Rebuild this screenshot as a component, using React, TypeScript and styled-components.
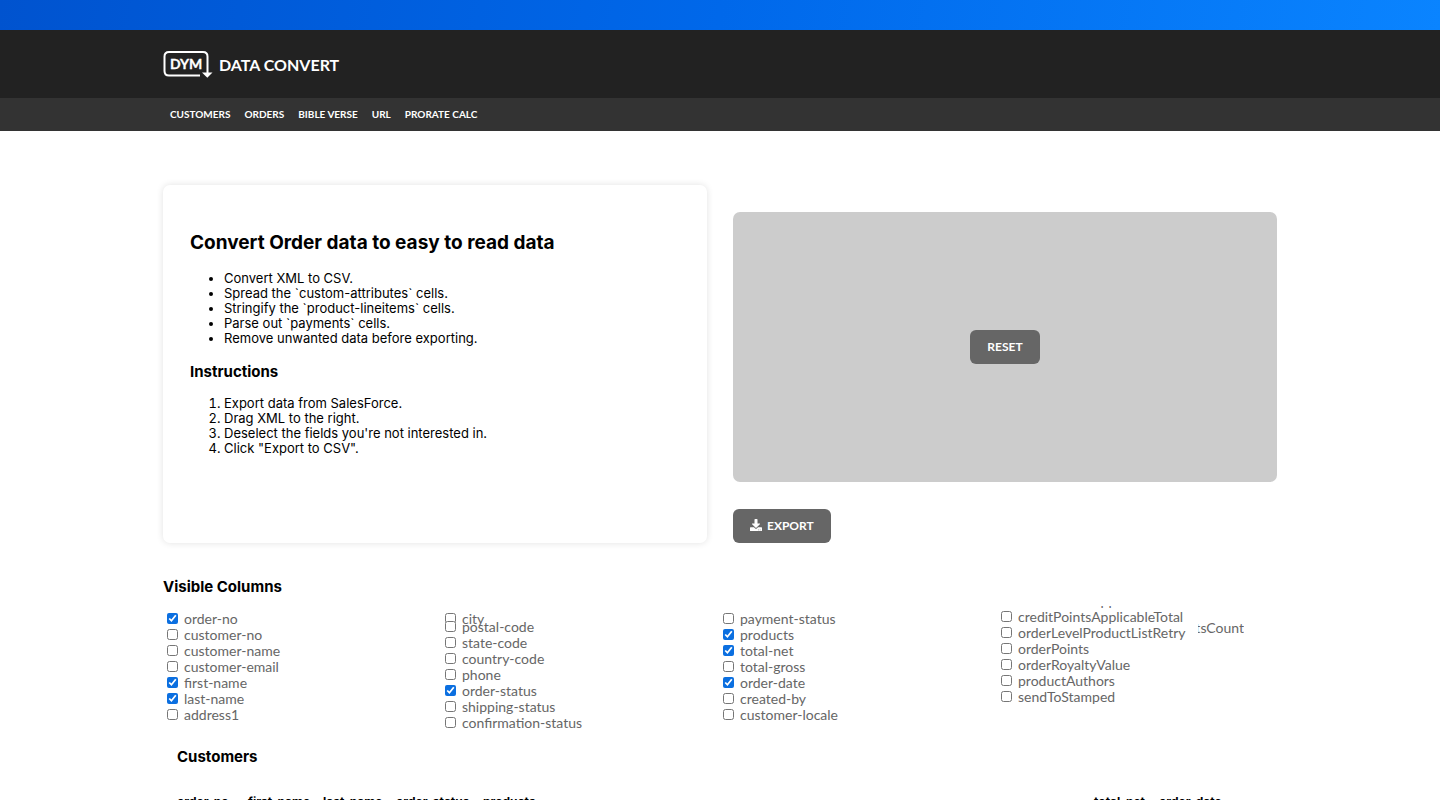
import React from "react";
import styled, { createGlobalStyle } from "styled-components";
import { FaDownload } from "react-icons/fa";

const GlobalStyle = createGlobalStyle`
  *, *::before, *::after { box-sizing: border-box; }
  body {
    margin: 0;
    background: #fff;
    color: #000;
    font-family: Inter, "Liberation Sans", sans-serif;
    font-size: 13px;
    line-height: 15px;
  }
`;

const Banner = styled.div`
  height: 30px;
  background: linear-gradient(100deg, #0053cf 0%, #0068ea 50%, #0a84ff 100%);
`;

const Container = styled.div`
  width: 100%;
  max-width: 1114px;
  margin: 0 auto;
`;

const Header = styled.header`
  background: #222;
  color: #fff;
  font-family: Lato, sans-serif;
`;

const Brand = styled.a`
  display: flex;
  align-items: center;
  gap: 6px;
  height: 68px;
  color: #fff;
  font-size: 16px;
  font-weight: 700;
  text-decoration: none;
`;

const NavBar = styled.nav`
  background: #333;
  font-family: Lato, sans-serif;
`;

const NavLinks = styled.div`
  display: flex;
  align-items: center;
  gap: 14px;
  height: 33px;
  padding-left: 7px;
`;

const NavLink = styled.a`
  color: #fff;
  font-size: 10px;
  font-weight: 700;
  text-decoration: none;
`;

const Hero = styled.section`
  display: grid;
  grid-template-columns: 1fr 1fr;
  gap: 26px;
  padding-top: 54px;
`;

const Card = styled.article`
  padding: 27px;
  border-radius: 7px;
  box-shadow: 0 0 7px rgba(0, 0, 0, 0.12);
`;

const CardTitle = styled.h1`
  margin: 18px 0 16px;
  font-size: 19px;
  line-height: 25px;
`;

const SectionTitle = styled.h2<{ $gap?: number }>`
  margin: 0 0 ${(p) => p.$gap ?? 15}px;
  font-size: 15px;
  line-height: 18px;
`;

const Bullets = styled.ul`
  margin: 0 0 17px;
  padding-left: 34px;
`;

const Steps = styled.ol`
  margin: 0;
  padding-left: 34px;
`;

const Tools = styled.div`
  display: flex;
  flex-direction: column;
  align-items: flex-start;
  gap: 27px;
  padding-top: 27px;
`;

const DropZone = styled.div`
  display: flex;
  align-items: center;
  justify-content: center;
  width: 100%;
  height: 270px;
  border-radius: 7px;
  background: #ccc;
`;

const Button = styled.button`
  display: flex;
  align-items: center;
  gap: 5px;
  height: 34px;
  padding: 0 17px 2px;
  border: 0;
  border-radius: 6px;
  background: #666;
  color: #fff;
  font: 700 12px Lato, sans-serif;
  text-transform: uppercase;
`;

const ColumnsSection = styled.section`
  padding-top: 35px;
`;

const ColumnGrid = styled.div`
  display: grid;
  grid-template-columns: repeat(4, 1fr);
  padding-right: 2px;
  color: #666;
  font-family: Lato, sans-serif;
  font-size: 14px;
  line-height: 16px;
`;

const FieldColumn = styled.div<{ $top: number }>`
  position: relative;
  padding: ${(p) => p.$top}px 0 0 4px;
`;

const FieldRow = styled.label<{ $overlap?: boolean }>`
  display: flex;
  align-items: center;
  gap: 6px;
  height: 16px;
  margin-bottom: ${(p) => (p.$overlap ? -8 : 0)}px;
`;

const Checkbox = styled.input`
  width: 11px;
  height: 11px;
  margin: 0 0 2px;
  accent-color: #0b6fe0;
`;

const ClippedRow = styled.div`
  display: flex;
  align-items: flex-end;
  height: 3px;
  padding-left: 17px;
  overflow: hidden;
`;

const ClippedLabel = styled.span`
  position: absolute;
  top: 14px;
  left: 201px;
  display: flex;
  justify-content: flex-end;
  width: 46px;
  overflow: hidden;
`;

const Results = styled.section`
  padding: 17px 14px 0;
`;

const Table = styled.table`
  width: 100%;
  border-collapse: collapse;
  table-layout: fixed;
  font-size: 12px;

  th {
    padding: 0;
    text-align: left;
    white-space: nowrap;
  }
`;

type Field = { name: string; on?: boolean; overlap?: boolean };

const fields: Field[][] = [
  [
    { name: "order-no", on: true },
    { name: "customer-no" },
    { name: "customer-name" },
    { name: "customer-email" },
    { name: "first-name", on: true },
    { name: "last-name", on: true },
    { name: "address1" },
  ],
  [
    { name: "city", overlap: true },
    { name: "postal-code" },
    { name: "state-code" },
    { name: "country-code" },
    { name: "phone" },
    { name: "order-status", on: true },
    { name: "shipping-status" },
    { name: "confirmation-status" },
  ],
  [
    { name: "payment-status" },
    { name: "products", on: true },
    { name: "total-net", on: true },
    { name: "total-gross" },
    { name: "order-date", on: true },
    { name: "created-by" },
    { name: "customer-locale" },
  ],
  [
    { name: "creditPointsApplicableTotal" },
    { name: "orderLevelProductListRetry" },
    { name: "orderPoints" },
    { name: "orderRoyaltyValue" },
    { name: "productAuthors" },
    { name: "sendToStamped" },
  ],
];

const resultColumns: { name: string; width?: number }[] = [
  { name: "order-no", width: 71 },
  { name: "first-name", width: 75 },
  { name: "last-name", width: 73 },
  { name: "order-status", width: 87 },
  { name: "products" },
  { name: "total-net", width: 65 },
  { name: "order-date", width: 104 },
];

const Logo = () => (
  <svg width="50" height="28" viewBox="0 0 50 28" fill="none" aria-hidden="true">
    <path
      d="M37 25.500H6Q1.500 25.500 1.500 21V6.500Q1.500 2 6 2H40Q44.500 2 44.500 6.500V23"
      stroke="#fff"
      strokeWidth="2"
    />
    <path d="M39 22.500h10.500L44.300 27.800z" fill="#fff" />
    <text
      x="7"
      y="19"
      fill="#fff"
      stroke="#fff"
      strokeWidth="0.300"
      fontFamily="Lato, sans-serif"
      fontSize="14"
      fontWeight="700"
    >
      DYM
    </text>
  </svg>
);

const FieldItem = ({ field }: { field: Field }) => (
  <FieldRow $overlap={field.overlap}>
    <Checkbox type="checkbox" defaultChecked={field.on} />
    {field.name}
  </FieldRow>
);

export default function App() {
  return (
    <>
      <GlobalStyle />
      <Banner />
      <Header>
        <Container>
          <Brand href="#">
            <Logo />
            DATA CONVERT
          </Brand>
        </Container>
      </Header>
      <NavBar>
        <Container>
          <NavLinks>
            {["CUSTOMERS", "ORDERS", "BIBLE VERSE", "URL", "PRORATE CALC"].map((item) => (
              <NavLink key={item} href="#">
                {item}
              </NavLink>
            ))}
          </NavLinks>
        </Container>
      </NavBar>
      <Container as="main">
        <Hero>
          <Card>
            <CardTitle>Convert Order data to easy to read data</CardTitle>
            <Bullets>
              <li>Convert XML to CSV.</li>
              <li>Spread the `custom-attributes` cells.</li>
              <li>Stringify the `product-lineitems` cells.</li>
              <li>Parse out `payments` cells.</li>
              <li>Remove unwanted data before exporting.</li>
            </Bullets>
            <SectionTitle>Instructions</SectionTitle>
            <Steps>
              <li>Export data from SalesForce.</li>
              <li>Drag XML to the right.</li>
              <li>Deselect the fields you're not interested in.</li>
              <li>Click "Export to CSV".</li>
            </Steps>
          </Card>
          <Tools>
            <DropZone>
              <Button type="button">Reset</Button>
            </DropZone>
            <Button type="button">
              <FaDownload />
              Export
            </Button>
          </Tools>
        </Hero>
        <ColumnsSection>
          <SectionTitle $gap={10}>Visible Columns</SectionTitle>
          <ColumnGrid>
            {fields.map((column, index) => {
              const last = index === fields.length - 1;
              return (
                <FieldColumn key={index} $top={last ? 0 : 5}>
                  {last && <ClippedRow>creditPointsApplied</ClippedRow>}
                  {column.map((field) => (
                    <FieldItem key={field.name} field={field} />
                  ))}
                  {last && <ClippedLabel>tsCount</ClippedLabel>}
                </FieldColumn>
              );
            })}
          </ColumnGrid>
        </ColumnsSection>
        <Results>
          <SectionTitle $gap={28}>Customers</SectionTitle>
          <Table>
            <thead>
              <tr>
                {resultColumns.map((column) => (
                  <th key={column.name} style={{ width: column.width }}>
                    {column.name}
                  </th>
                ))}
              </tr>
            </thead>
          </Table>
        </Results>
      </Container>
    </>
  );
}
